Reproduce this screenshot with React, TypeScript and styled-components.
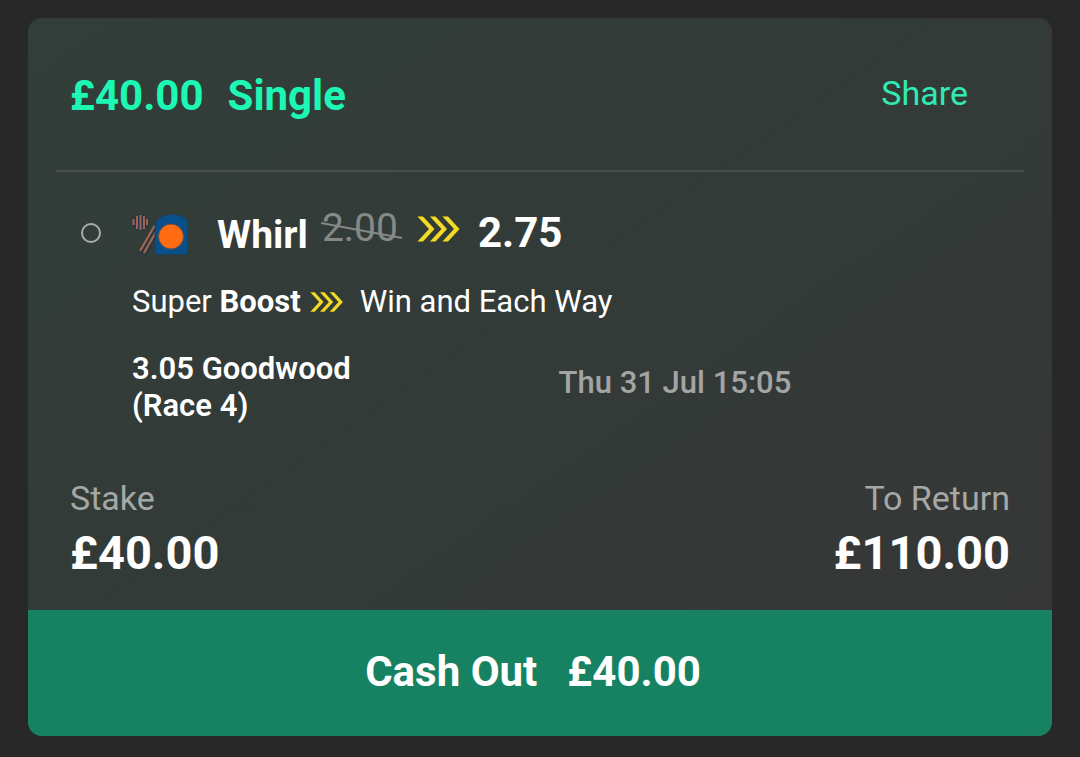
import React from "react";
import styled, { createGlobalStyle } from "styled-components";

const GlobalStyle = createGlobalStyle`
  * {
    box-sizing: border-box;
  }
  body {
    margin: 0;
    background: #282828;
    color: #ffffff;
    font-family: Roboto, "Liberation Sans", sans-serif;
  }
  button {
    border: 0;
    padding: 0;
    background: none;
    font-family: inherit;
    cursor: pointer;
  }
  h1, h2, p, dl, dt, dd {
    margin: 0;
    font-weight: 400;
  }
`;

const Page = styled.main`
  padding: 18px 28px 20px;
`;

const Card = styled.article`
  overflow: hidden;
  border-radius: 14px;
  background: linear-gradient(145deg, #323e39 0%, #333a37 55%, #363636 100%);
`;

const Header = styled.header`
  display: flex;
  align-items: flex-start;
  justify-content: space-between;
  margin: 0 28px;
  padding: 55px 56px 51px 14px;
  border-bottom: 2px solid #464d4a;
`;

const Title = styled.h1`
  display: flex;
  gap: 24px;
  font-size: 42px;
  line-height: 46px;
  font-weight: 700;
  color: #1df7b4;
`;

const ShareButton = styled.button`
  font-size: 34px;
  line-height: 40px;
  color: #30eab2;
`;

const Selection = styled.section`
  display: grid;
  grid-template-columns: 51px 1fr;
  padding: 36px 28px 0 53px;
`;

const Status = styled.span`
  width: 20px;
  height: 20px;
  margin-top: 15px;
  border: 2px solid #a9adab;
  border-radius: 50%;
`;

const Runner = styled.div`
  display: flex;
  align-items: flex-start;
  height: 54px;
`;

const Silks = styled.svg`
  width: 58px;
  height: 44px;
  margin: 5px 27px 0 0;
`;

const Name = styled.h2`
  font-size: 39px;
  line-height: 54px;
  font-weight: 700;
`;

const OldPrice = styled.del`
  position: relative;
  margin-left: 14px;
  font-size: 39px;
  line-height: 40px;
  color: #858988;
  text-decoration: none;
`;

const Strike = styled.svg`
  position: absolute;
  top: 0;
  left: -1px;
  width: 82px;
  height: 40px;
`;

const BoostIcon = styled.svg<{ $size: "large" | "small" }>`
  width: ${(p) => (p.$size === "large" ? 44 : 34)}px;
  height: ${(p) => (p.$size === "large" ? 28 : 22)}px;
  margin: ${(p) => (p.$size === "large" ? "7px 17px 0 19px" : "0 16px 0 9px")};
`;

const Price = styled.strong`
  font-size: 42px;
  line-height: 50px;
  font-weight: 700;
`;

const Market = styled.p`
  display: flex;
  align-items: center;
  margin-top: 20px;
  font-size: 31px;
  line-height: 40px;
  white-space: pre;
`;

const Event = styled.div`
  display: grid;
  grid-template-columns: 11fr 12fr;
  margin-top: 28px;
`;

const Race = styled.p`
  font-size: 31px;
  line-height: 37px;
  font-weight: 600;
`;

const Start = styled.time`
  font-size: 31px;
  line-height: 66px;
  font-weight: 500;
  color: #a3a5a4;
`;

const Totals = styled.dl`
  display: flex;
  justify-content: space-between;
  padding: 54px 42px 29px;
`;

const Total = styled.div<{ $align: "left" | "right" }>`
  text-align: ${(p) => p.$align};
`;

const Label = styled.dt`
  font-size: 34px;
  line-height: 40px;
  color: #a6a8a7;
`;

const Amount = styled.dd`
  padding-top: 6px;
  font-size: 47px;
  line-height: 57px;
  font-weight: 700;
`;

const CashOut = styled.button`
  display: flex;
  align-items: center;
  justify-content: center;
  gap: 30px;
  width: 100%;
  padding: 37px 14px 39px 0;
  background: #178262;
  color: #ffffff;
  font-size: 42px;
  line-height: 50px;
  font-weight: 700;
`;

function Boost({ size }: { size: "large" | "small" }) {
  return (
    <BoostIcon $size={size} viewBox="0 0 44 28" aria-hidden="true">
      <g fill="#f2da2a" stroke="#4a4714" strokeWidth="1" paintOrder="stroke">
        {[0.5, 13, 25.5].map((x) => (
          <path key={x} d={`M${x} 1.500h5.500l11.500 12.500-11.500 12.500h-5.500l11.500-12.500z`} />
        ))}
      </g>
    </BoostIcon>
  );
}

function JockeySilks() {
  return (
    <Silks viewBox="0 0 58 44" aria-hidden="true">
      <circle cx="8" cy="9.500" r="8.500" fill="#2b3546" />
      <path d="M1.500 6v6M5 3v13M8.500 2v15M12 3v13M15 6v6" stroke="#9a6653" strokeWidth="2" />
      <path d="M23 9L6 38l8 4 10-18z" fill="#26323b" />
      <path d="M23 12L8 38M25 17L12 40" stroke="#9c6451" strokeWidth="2.500" />
      <path d="M23 41.500V12C25 5 31 1.500 39 1.500S53 4 55.500 7v34.500z" fill="#09508b" stroke="#213e55" strokeWidth="1" />
      <circle cx="39" cy="23.500" r="12.500" fill="#ff6c12" stroke="#654e51" strokeWidth="1" />
    </Silks>
  );
}

export default function App() {
  return (
    <>
      <GlobalStyle />
      <Page>
        <Card>
          <Header>
            <Title>
              <span>£40.00</span>
              <span>Single</span>
            </Title>
            <ShareButton type="button">Share</ShareButton>
          </Header>
          <Selection>
            <Status />
            <div>
              <Runner>
                <JockeySilks />
                <Name>Whirl</Name>
                <OldPrice>
                  2.00
                  <Strike viewBox="0 0 82 40" aria-hidden="true">
                    <path d="M0 15L81 30" stroke="#858988" strokeWidth="2" />
                  </Strike>
                </OldPrice>
                <Boost size="large" />
                <Price>2.75</Price>
              </Runner>
              <Market>
                <span>Super </span>
                <b>Boost</b>
                <Boost size="small" />
                <span>Win and Each Way</span>
              </Market>
              <Event>
                <Race>
                  3.05 Goodwood
                  <br />
                  (Race 4)
                </Race>
                <Start>Thu 31 Jul 15:05</Start>
              </Event>
            </div>
          </Selection>
          <Totals>
            <Total $align="left">
              <Label>Stake</Label>
              <Amount>£40.00</Amount>
            </Total>
            <Total $align="right">
              <Label>To Return</Label>
              <Amount>£110.00</Amount>
            </Total>
          </Totals>
          <CashOut type="button">
            <span>Cash Out</span>
            <span>£40.00</span>
          </CashOut>
        </Card>
      </Page>
    </>
  );
}
